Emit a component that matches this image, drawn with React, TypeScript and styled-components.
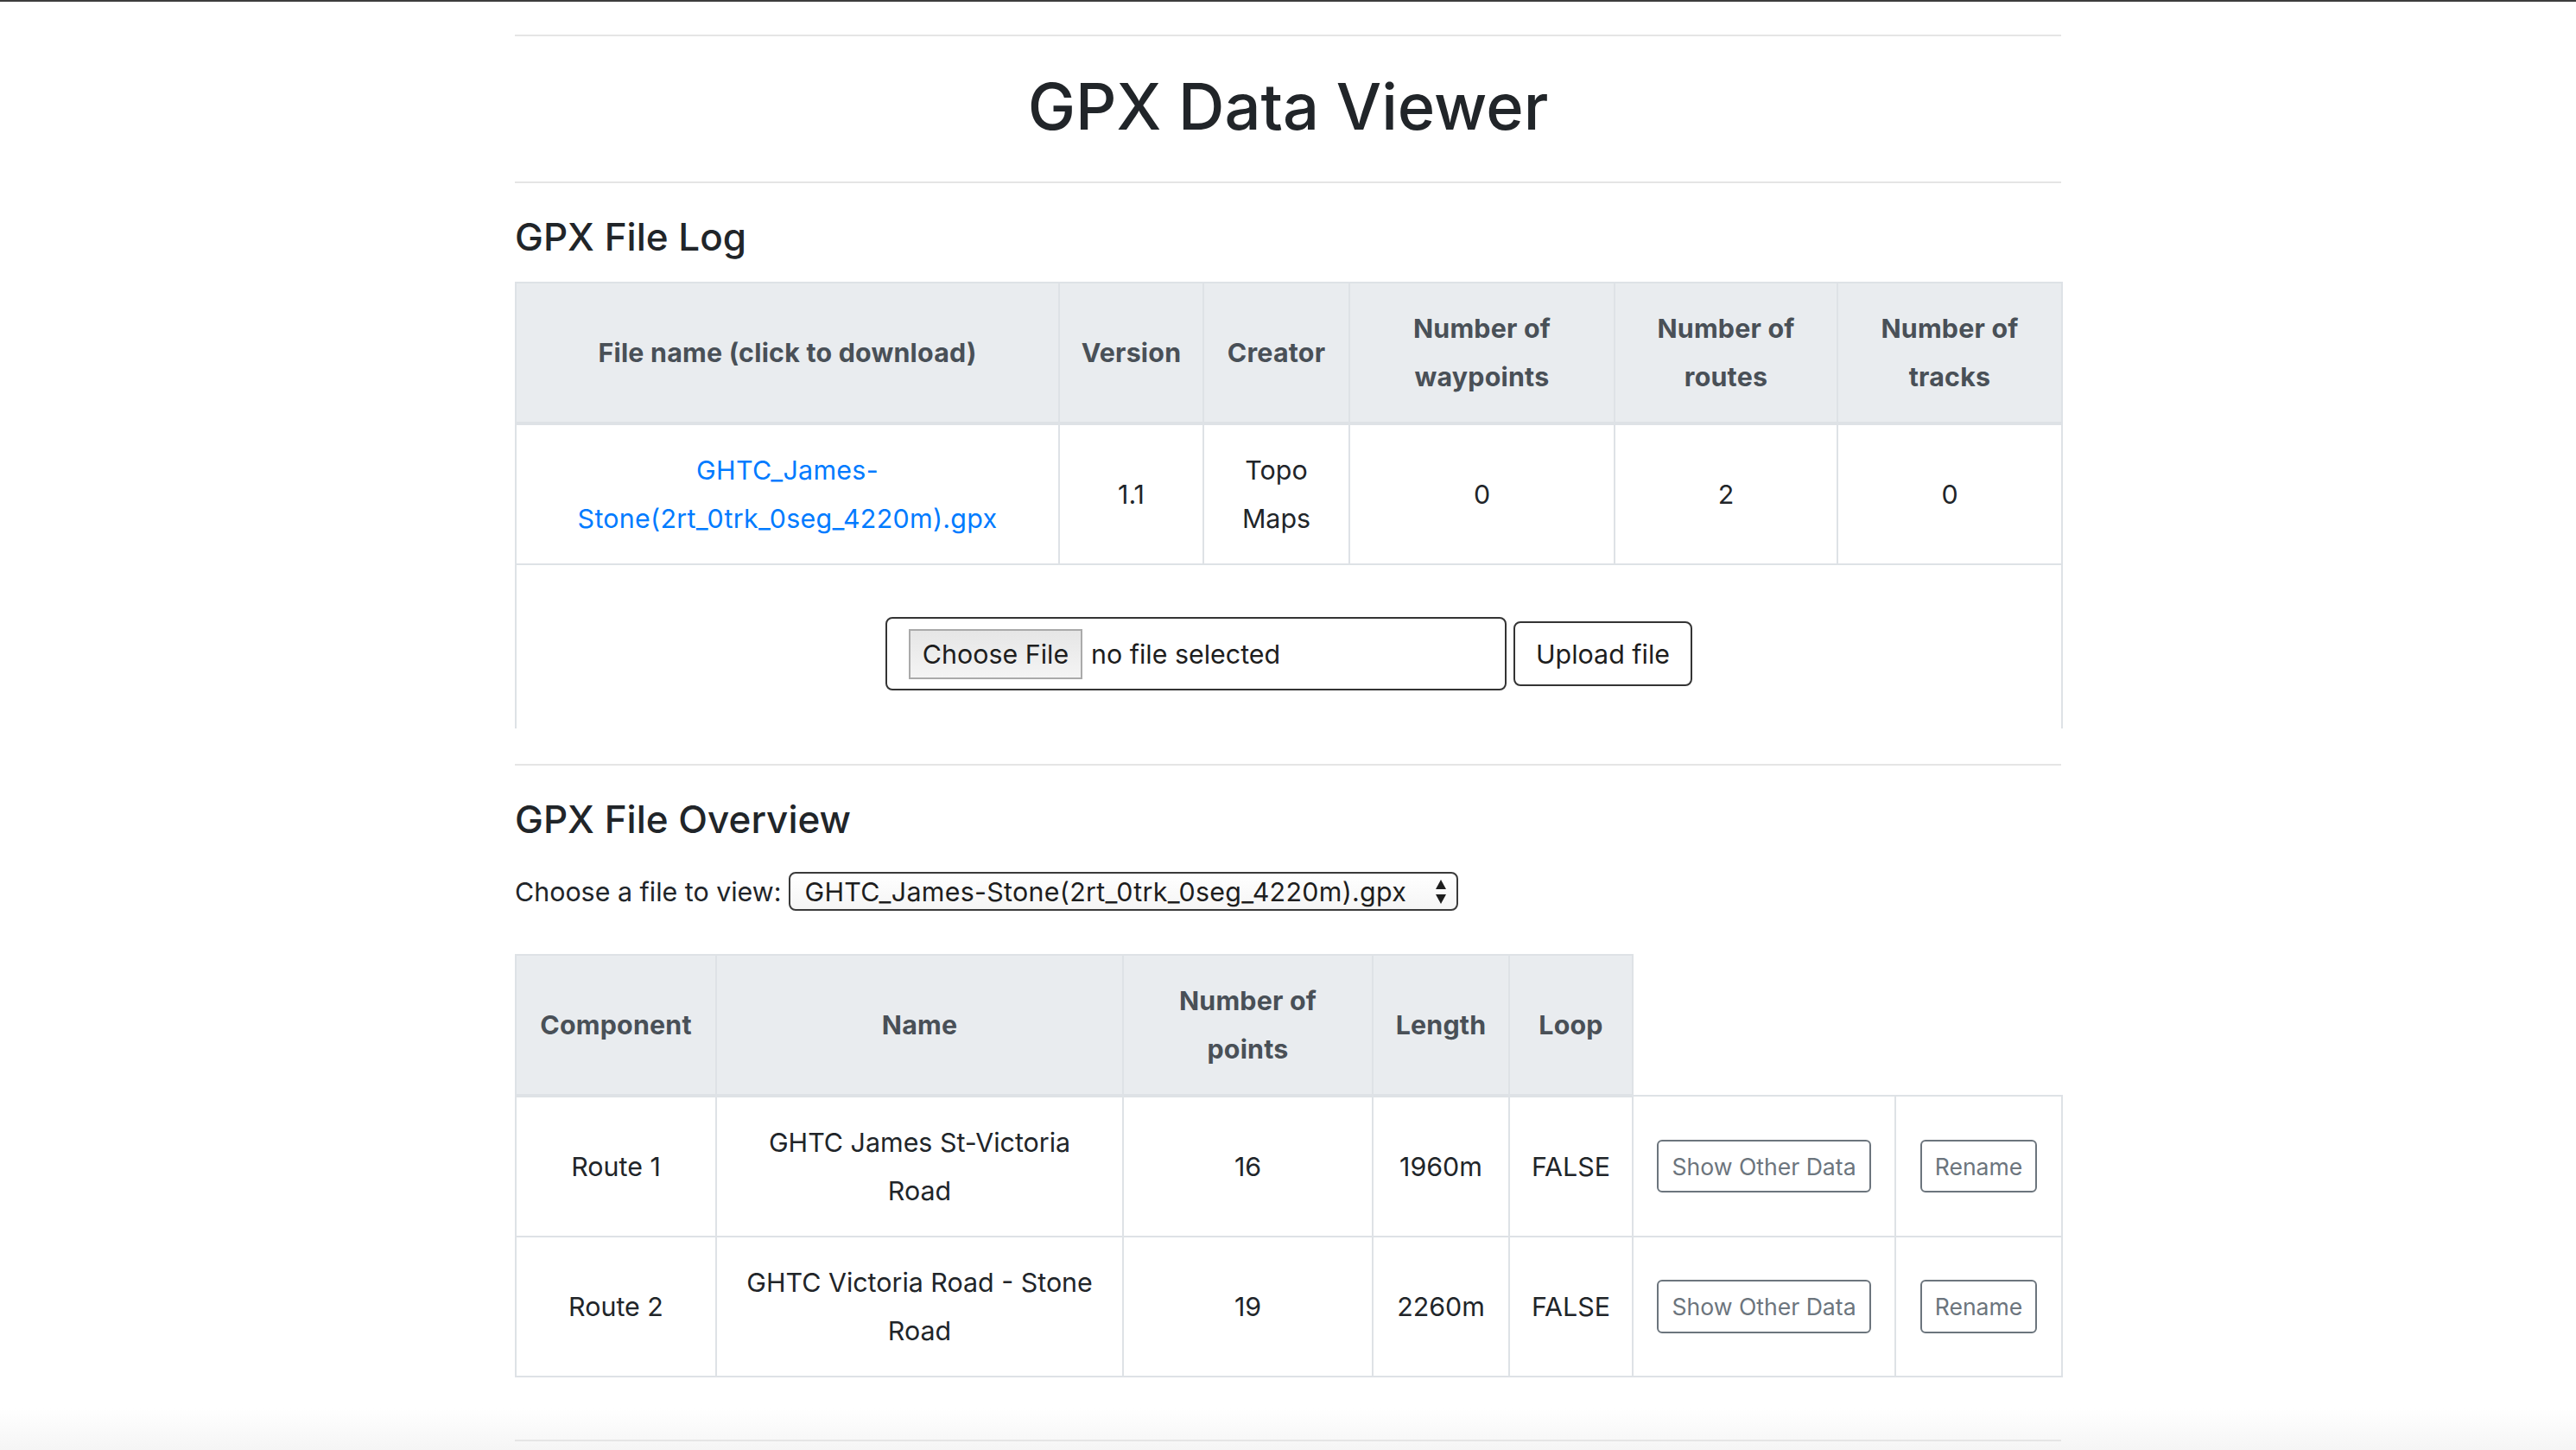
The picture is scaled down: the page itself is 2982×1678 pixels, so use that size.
import React from "react";
import styled, { createGlobalStyle } from "styled-components";

const GlobalStyle = createGlobalStyle`
  html, body { margin: 0; padding: 0; }
  * { box-sizing: border-box; }
  body {
    font-family: Inter, "Noto Sans", "Liberation Sans", sans-serif;
    font-size: 30.4px;
    color: #212529;
    min-height: 1678px;
    background: linear-gradient(to bottom, #ffffff 0px, #ffffff 1630px, #f5f5f5 1678px);
  }
`;

const TopEdge = styled.div`
  height: 2px;
  background: #3d3d3d;
`;

const Container = styled.main`
  width: 1790px;
  margin: 0 auto;
  padding-top: 38px;
`;

const Rule = styled.hr<{ $mt?: number }>`
  margin: ${(p) => p.$mt ?? 0}px 0 0;
  border: 0;
  height: 2px;
  background: #e5e5e5;
`;

const Title = styled.h1`
  margin: 0 0 6px;
  font-size: 74px;
  font-weight: 500;
  line-height: 162px;
  text-align: center;
  color: #212529;
`;

const SectionTitle = styled.h4<{ $mb: number }>`
  margin: 32px 0 ${(p) => p.$mb}px;
  font-size: 44px;
  font-weight: 500;
  line-height: 60px;
  color: #212529;
`;

const DataTable = styled.table`
  width: 100%;
  border-collapse: collapse;
  table-layout: fixed;
  text-align: center;
  line-height: 56px;
`;

const Col = styled.col<{ $w: number }>`
  width: ${(p) => p.$w}px;
`;

const HeadCell = styled.th`
  background: #e9ecef;
  color: #495057;
  font-weight: 700;
  letter-spacing: 0.2px;
  padding: 24px 23px;
  border: 2px solid #dee2e6;
  border-bottom-width: 4px;
  vertical-align: middle;
`;

const Cell = styled.td`
  padding: 24px 23px;
  border: 2px solid #dee2e6;
  vertical-align: middle;
  color: #212529;
`;

const UploadCell = styled(Cell)`
  padding: 60px 0 44px;
  border-bottom: none;
`;

const FileLink = styled.a`
  color: #007bff;
  text-decoration: none;
  letter-spacing: 0.3px;
`;

const UploadForm = styled.div`
  display: flex;
  justify-content: center;
  align-items: center;
  gap: 8px;
  line-height: normal;
`;

const FileInput = styled.div`
  width: 719px;
  height: 85px;
  border: 2px solid #343434;
  border-radius: 8px;
  display: flex;
  align-items: center;
  padding-left: 25px;
  text-align: left;
`;

const ChooseButton = styled.span`
  width: 201px;
  height: 58px;
  display: flex;
  align-items: center;
  justify-content: center;
  border: 2px solid #aaaaaa;
  background: linear-gradient(to bottom, #e6e6e6, #f4f4f4);
  color: #1e1e1e;
`;

const NoFile = styled.span`
  margin-left: 10px;
  color: #1e1e1e;
`;

const UploadButton = styled.button`
  width: 207px;
  height: 75px;
  border: 2px solid #343434;
  border-radius: 8px;
  background: #ffffff;
  font-family: inherit;
  font-size: 30.4px;
  color: #1e1e1e;
  padding: 0;
`;

const PickerRow = styled.div`
  display: flex;
  align-items: center;
  gap: 9px;
  margin-bottom: 50px;
  height: 45px;
`;

const PickerLabel = styled.span`
  color: #212529;
`;

const SelectBox = styled.div`
  width: 775px;
  height: 45px;
  border: 2px solid #3a3a3a;
  border-radius: 8px;
  display: flex;
  align-items: center;
  justify-content: space-between;
  padding: 0 10px 0 16px;
  background: linear-gradient(to bottom, #ffffff, #f5f5f5);
  color: #1e1e1e;
`;

const SelectText = styled.span`
  letter-spacing: 0.3px;
  white-space: nowrap;
`;

const ArrowIcon = styled.svg`
  flex-shrink: 0;
  width: 16px;
  height: 32px;
`;

const OutlineButton = styled.button`
  font-family: inherit;
  font-size: 26.6px;
  line-height: 42px;
  padding: 7.6px 15px;
  border: 2px solid #6c757d;
  border-radius: 6px;
  color: #6c757d;
  background: transparent;
  vertical-align: middle;
`;

const SelectArrows = () => (
  <ArrowIcon viewBox="0 0 16 32">
    <polygon points="8,2 14,13 2,13" fill="#1e1e1e" />
    <polygon points="2,19 14,19 8,30" fill="#1e1e1e" />
  </ArrowIcon>
);

const routes = [
  { comp: "Route 1", name: "GHTC James St-Victoria Road", pts: 16, len: "1960m", loop: "FALSE" },
  { comp: "Route 2", name: "GHTC Victoria Road - Stone Road", pts: 19, len: "2260m", loop: "FALSE" },
];

export default function App() {
  return (
    <>
      <GlobalStyle />
      <TopEdge />
      <Container>
        <Rule />
        <Title>GPX Data Viewer</Title>
        <Rule />

        <SectionTitle $mb={22}>GPX File Log</SectionTitle>
        <DataTable>
          <colgroup>
            <Col $w={629} />
            <Col $w={167} />
            <Col $w={169} />
            <Col $w={307} />
            <Col $w={258} />
            <Col $w={260} />
          </colgroup>
          <thead>
            <tr>
              <HeadCell>File name (click to download)</HeadCell>
              <HeadCell>Version</HeadCell>
              <HeadCell>Creator</HeadCell>
              <HeadCell>Number of waypoints</HeadCell>
              <HeadCell>Number of routes</HeadCell>
              <HeadCell>Number of tracks</HeadCell>
            </tr>
          </thead>
          <tbody>
            <tr>
              <Cell>
                <FileLink href="#">GHTC_James-Stone(2rt_0trk_0seg_4220m).gpx</FileLink>
              </Cell>
              <Cell>1.1</Cell>
              <Cell>Topo Maps</Cell>
              <Cell>0</Cell>
              <Cell>2</Cell>
              <Cell>0</Cell>
            </tr>
            <tr>
              <UploadCell colSpan={6}>
                <UploadForm>
                  <FileInput>
                    <ChooseButton>Choose File</ChooseButton>
                    <NoFile>no file selected</NoFile>
                  </FileInput>
                  <UploadButton>Upload file</UploadButton>
                </UploadForm>
              </UploadCell>
            </tr>
          </tbody>
        </DataTable>

        <Rule $mt={41} />
        <SectionTitle $mb={31}>GPX File Overview</SectionTitle>
        <PickerRow>
          <PickerLabel>Choose a file to view:</PickerLabel>
          <SelectBox>
            <SelectText>GHTC_James-Stone(2rt_0trk_0seg_4220m).gpx</SelectText>
            <SelectArrows />
          </SelectBox>
        </PickerRow>

        <DataTable>
          <colgroup>
            <Col $w={232} />
            <Col $w={471} />
            <Col $w={289} />
            <Col $w={158} />
            <Col $w={143} />
            <Col $w={304} />
            <Col $w={193} />
          </colgroup>
          <thead>
            <tr>
              <HeadCell>Component</HeadCell>
              <HeadCell>Name</HeadCell>
              <HeadCell>Number of points</HeadCell>
              <HeadCell>Length</HeadCell>
              <HeadCell>Loop</HeadCell>
            </tr>
          </thead>
          <tbody>
            {routes.map((r) => (
              <tr key={r.comp}>
                <Cell>{r.comp}</Cell>
                <Cell>{r.name}</Cell>
                <Cell>{r.pts}</Cell>
                <Cell>{r.len}</Cell>
                <Cell>{r.loop}</Cell>
                <Cell>
                  <OutlineButton>Show Other Data</OutlineButton>
                </Cell>
                <Cell>
                  <OutlineButton>Rename</OutlineButton>
                </Cell>
              </tr>
            ))}
          </tbody>
        </DataTable>

        <Rule $mt={72} />
      </Container>
    </>
  );
}
